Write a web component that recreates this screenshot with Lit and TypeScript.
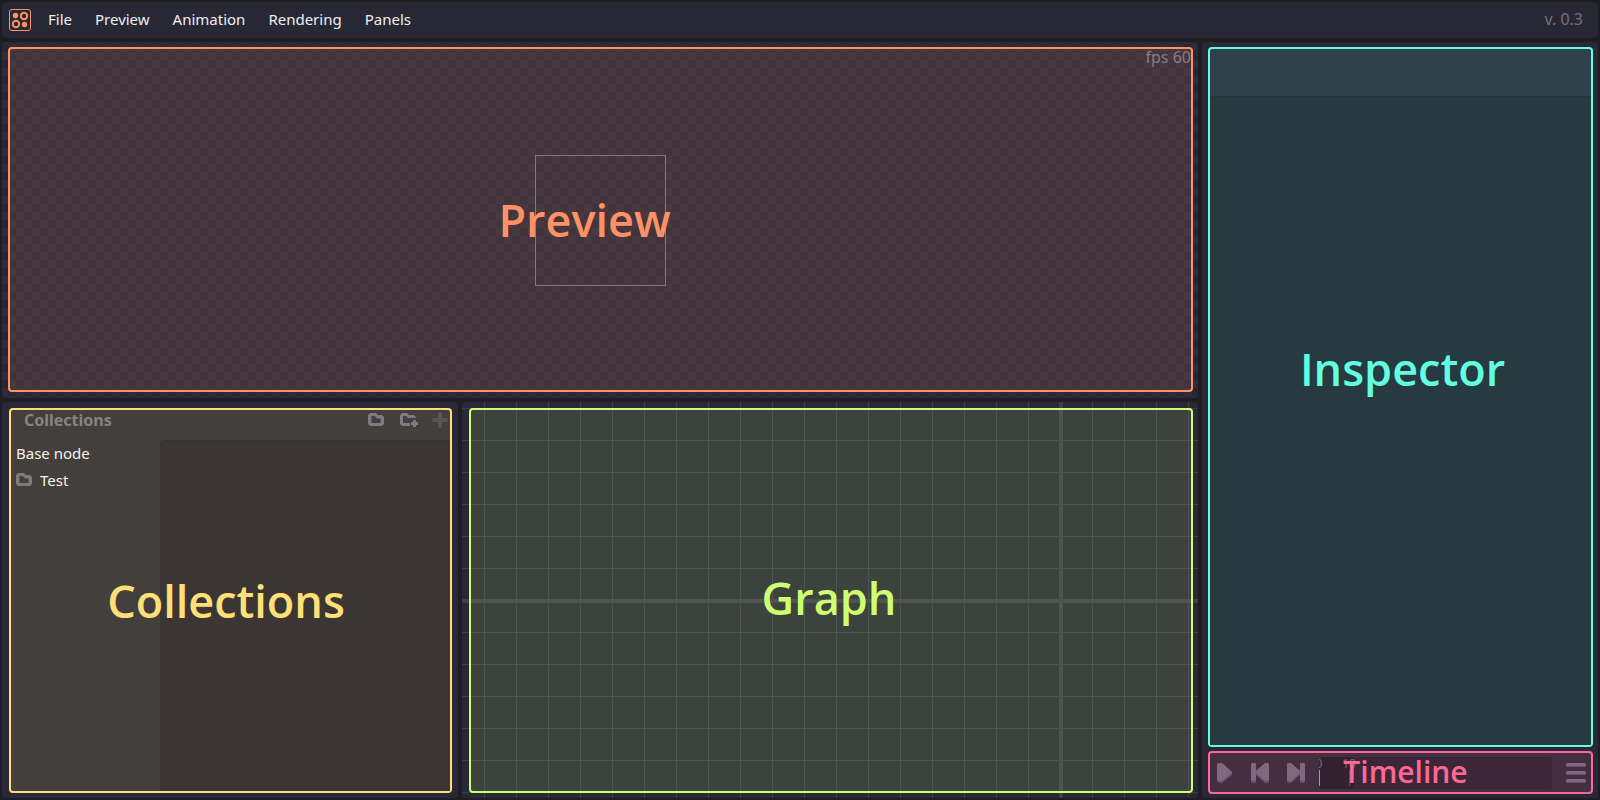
import { LitElement, html, css, svg } from "lit";
import { customElement } from "lit/decorators.js";

const folder = svg`<path fill-rule="evenodd" d="M2 1h6l2 2h4l2 2v7l-2 2H2l-2-2V3zM3.500 4v7h9V6.500H9L6.500 4z"/>`;

@customElement("app-root")
export class AppRoot extends LitElement {
  static styles = css`
    :host { display: block; font: 15px/20px "Noto Sans", sans-serif; color: #eeeef2; }
    * { box-sizing: border-box; }
    .app { min-height: 100vh; display: grid; grid-template-rows: 36px minmax(0, 1fr); gap: 4px; padding: 2px; background: #1d1d23; }
    .bar { display: flex; align-items: center; background: #282834; border-radius: 4px; padding: 0 15px 0 7px; }
    .logo { width: 22px; height: 22px; display: block; margin-right: 6px; }
    button { font: inherit; color: inherit; background: none; border: 0; margin: 0; padding: 0; display: block; cursor: pointer; }
    .menu { display: flex; flex: 1; padding-bottom: 2px; }
    .menu button { padding: 0 12px 0 11px; }
    .version { color: #72717f; font-size: 16px; padding-bottom: 2px; }
    .main { display: grid; grid-template-columns: minmax(0, 1fr) 396px; gap: 4px; }
    .left { display: grid; grid-template-rows: 356fr 396fr; gap: 4px; }
    .bottom { display: grid; grid-template-columns: 456px minmax(0, 1fr); gap: 4px; }
    .panel { position: relative; background: #282836; border-radius: 4px; overflow: hidden; }
    .zone { border: 2px solid; border-radius: 4px; position: relative; }
    .title { font: 600 45px/60px "Open Sans", "Noto Sans", sans-serif; margin: 0; }
    .cover { position: absolute; inset: 0; display: flex; align-items: center; justify-content: center; pointer-events: none; }
    .preview { padding: 5px 5px 6px 6px; display: grid;
      background: conic-gradient(#262634 25%, #2c2c3a 0 50%, #262634 0 75%, #2c2c3a 0) 6px 2px / 16px 16px; }
    .preview .zone { color: #ff9166; background: rgba(255, 145, 102, 0.13); }
    .preview .cover { padding-right: 32px; }
    .fps { position: absolute; top: -2px; right: 0; color: #8c7c83; font-size: 16px; }
    .frame { position: absolute; inset: 0; margin: auto; width: 131px; height: 131px; border: 1px solid #75717f; }
    .collections { padding: 6px 6px 5px 7px; display: grid; }
    .collections .zone { color: #ffe078; background: #433f3d; display: grid; grid-template-rows: 30px 1fr; }
    .head { display: flex; align-items: center; gap: 16px; padding: 0 2px 10px 13px; color: #88847f; }
    .head h2 { font: bold 16px/20px "Noto Sans", sans-serif; margin: 0; flex: 1; }
    .head svg, .tree svg { display: block; fill: #7d7a80; overflow: visible; }
    .head .off { fill: #59565a; }
    .split { display: grid; grid-template-columns: 149px 1fr; }
    .tree { list-style: none; margin: 0; padding: 0 5px; color: #f6f2e8; line-height: 26px; }
    .tree button { display: flex; align-items: center; gap: 8px; line-height: 28px; }
    .items { background: #3b3634; border-radius: 4px 0 0 0; border-top: 1px solid #37322f; }
    .collections .cover { padding-right: 9px; }
    .graph { padding: 6px 5px 5px 7px; display: grid;
      background:
        linear-gradient(#3d3d4b, #3d3d4b) 597px 0 / 4px 100% no-repeat,
        linear-gradient(#3d3d4b, #3d3d4b) 0 calc(50% + 1px) / 100% 4px no-repeat,
        linear-gradient(90deg, #3d3d4b 1px, transparent 0) 22px 0 / 32px 32px,
        linear-gradient(#3d3d4b 1px, transparent 0) 0 6px / 32px 32px,
        #282836; }
    .graph .zone { color: #ceff70; background: rgba(206, 255, 112, 0.12); }
    .graph .cover { padding: 0 4px 6px 0; }
    .side { display: grid; grid-template-rows: minmax(0, 1fr) 43px; gap: 4px; padding: 5px 5px 4px 6px; }
    .inspector { color: #62ffe0; display: grid; grid-template-rows: 47px 1fr; background: #2f424b; }
    .fields { background: #283a41; border-top: 1px solid #24343b; }
    .inspector .cover { padding: 0 0 56px 4px; }
    .timeline { color: #ff6896; background: #442f41; display: flex; align-items: center; padding: 0 5px 0 7px; }
    .timeline svg { display: block; fill: #80697f; }
    .transport { display: flex; gap: 18px; }
    .track { position: relative; flex: 1; height: 32px; margin: 0 14px; border-radius: 4px; background: #3b2737; overflow: hidden; color: #80697f; font-size: 12px; line-height: 14px; }
    .past { width: 35px; height: 32px; background: #33212f; border-radius: 4px; }
    .mark { position: absolute; top: 0; bottom: 3px; left: 0; width: 1px; background: linear-gradient(transparent 13px, #a994a5 0); }
    .mark.second { left: 30px; background: linear-gradient(transparent 13px, #5c4558 0); }
    .mark span { position: absolute; transform: translateX(-50%); }
    .timeline .title { font-size: 30px; line-height: 40px; }
    .timeline .cover { padding: 0 0 2px 10px; }
  `;

  render() {
    return html`
      <div class="app">
        <header class="bar">
          <svg class="logo" viewBox="0 0 22 22" fill="none" stroke="#ff9166">
            <rect x=".5" y=".5" width="21" height="21" rx="2.5"/>
            <g stroke-width="2"><circle cx="15" cy="7" r="3.2"/><circle cx="7" cy="15" r="3.2"/></g>
            <g fill="#ff9166" stroke="none"><circle cx="6.500" cy="6.500" r="2.700"/><circle cx="15.500" cy="15.500" r="2.700"/></g>
          </svg>
          <nav class="menu">
            ${["File", "Preview", "Animation", "Rendering", "Panels"].map((name) => html`<button>${name}</button>`)}
          </nav>
          <span class="version">v. 0.3</span>
        </header>
        <main class="main">
          <div class="left">
            <section class="panel preview">
              <div class="frame"></div>
              <div class="zone"><span class="fps">fps 60</span><div class="cover"><h1 class="title">Preview</h1></div></div>
            </section>
            <div class="bottom">
              <section class="panel collections">
                <div class="zone">
                  <div class="head">
                    <h2>Collections</h2>
                    <button aria-label="Open folder"><svg width="16" height="16">${folder}</svg></button>
                    <button aria-label="New folder"><svg width="16" height="16"><path d="M2 1h5l2 2h5l2 2v1h-3L8 6 6 4H3v7h7v3H2l-2-2V3zM13 8h3v2h2v3h-2v2h-3v-2h-2v-3h2z"/></svg></button>
                    <button aria-label="Add node" disabled><svg class="off" width="16" height="16"><path d="M6 1l2-1 2 1v5h5l1 2-1 2h-5v5l-2 1-2-1v-5H1L0 8l1-2h5z"/></svg></button>
                  </div>
                  <div class="split">
                    <ul class="tree">
                      <li>Base node</li>
                      <li><button><svg width="16" height="16">${folder}</svg>Test</button></li>
                    </ul>
                    <div class="items"></div>
                  </div>
                  <div class="cover"><h1 class="title">Collections</h1></div>
                </div>
              </section>
              <section class="panel graph">
                <div class="zone"><div class="cover"><h1 class="title">Graph</h1></div></div>
              </section>
            </div>
          </div>
          <aside class="panel side">
            <section class="zone inspector">
              <div></div>
              <div class="fields"></div>
              <div class="cover"><h1 class="title">Inspector</h1></div>
            </section>
            <section class="zone timeline">
              <div class="transport">
                <button aria-label="Play"><svg width="16" height="20"><path d="M0 2l2-2h3l10 9v3L5 20H2l-2-2z" fill="#695066"/><path d="M0 1l2-1h3l10 9v1L5 18H1l-1-1z"/></svg></button>
                <button aria-label="Previous frame"><svg width="18" height="20"><path d="M0 1l1-1h3l1 1v7l9-8h3l1 1v18l-1 1h-3l-9-8v7l-1 1H1l-1-1z" fill="#695066"/><path d="M0 1l1-1h3l1 1v7l9-8h3l1 1v16l-1 1h-3l-9-8v7l-1 1H1l-1-1z"/></svg></button>
                <button aria-label="Next frame"><svg width="18" height="20"><path d="M18 1l-1-1h-3l-1 1v7L4 0H1L0 1v18l1 1h3l9-8v7l1 1h3l1-1z" fill="#695066"/><path d="M18 1l-1-1h-3l-1 1v7L4 0H1L0 1v16l1 1h3l9-8v7l1 1h3l1-1z"/></svg></button>
              </div>
              <div class="track">
                <div class="past"></div>
                <div class="mark"><span>0</span></div>
                <div class="mark second"><span>10</span></div>
              </div>
              <button aria-label="Timeline menu"><svg width="20" height="20"><path d="M1 1h18l1 1v1l-1 1H1L0 3V2zM1 9h18l1 1v1l-1 1H1l-1-1v-1zM1 17h18l1 1v1l-1 1H1l-1-1v-1z" fill="#695066"/><path d="M1 0h18l1 1v1l-1 1H1L0 2V1zM1 8h18l1 1v1l-1 1H1l-1-1V9zM1 16h18l1 1v1l-1 1H1l-1-1v-1z"/></svg></button>
              <div class="cover"><h1 class="title">Timeline</h1></div>
            </section>
          </aside>
        </main>
      </div>`;
  }
}
